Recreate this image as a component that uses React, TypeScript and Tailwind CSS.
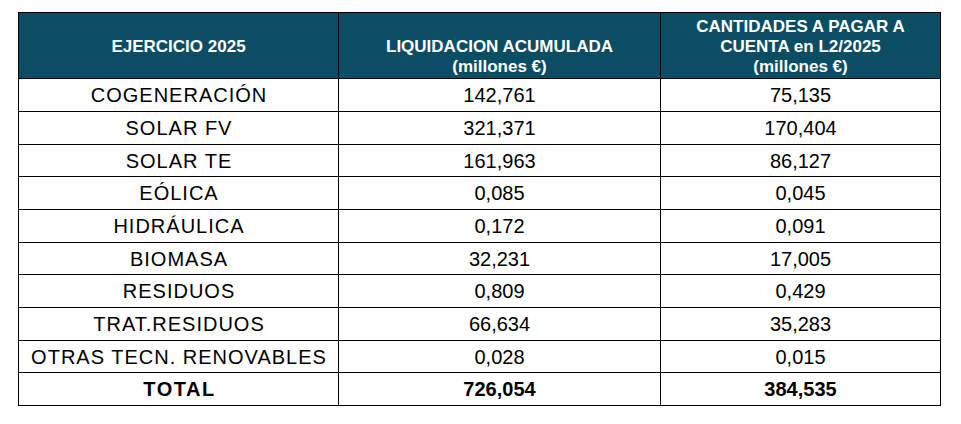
import React from "react";

const rows: [string, string, string, number][] = [
  ["COGENERACIÓN", "142,761", "75,135", 32],
  ["SOLAR FV", "321,371", "170,404", 32],
  ["SOLAR TE", "161,963", "86,127", 31],
  ["EÓLICA", "0,085", "0,045", 32],
  ["HIDRÁULICA", "0,172", "0,091", 32],
  ["BIOMASA", "32,231", "17,005", 31],
  ["RESIDUOS", "0,809", "0,429", 32],
  ["TRAT.RESIDUOS", "66,634", "35,283", 32],
  ["OTRAS TECN. RENOVABLES", "0,028", "0,015", 31],
];

const hClass: Record<number, string> = {
  31: "h-[31px]",
  32: "h-[32px]",
};

export default function App() {
  return (
    <div className="w-[961px] h-[424px] bg-white pt-[12px] pl-[18px]" style={{ fontFamily: '"Liberation Sans", Arial, sans-serif' }}>
      <div className="grid grid-cols-[319px_321px_279px] gap-px bg-black p-px w-[923px] text-black">
        <div className="h-[65px] bg-[#0b4d62] text-white font-bold text-[17px] leading-[20px] flex items-center justify-center text-center pt-[3px]">
          EJERCICIO 2025
        </div>
        <div className="h-[65px] bg-[#0b4d62] text-white font-bold text-[17px] leading-[20px] flex flex-col justify-end items-center text-center pb-[1px]">
          <div>LIQUIDACION ACUMULADA</div>
          <div>(millones €)</div>
        </div>
        <div className="h-[65px] bg-[#0b4d62] text-white font-bold text-[17px] leading-[20px] flex flex-col justify-end items-center text-center pb-[1px]">
          <div>CANTIDADES A PAGAR A</div>
          <div>CUENTA en L2/2025</div>
          <div>(millones €)</div>
        </div>
        {rows.map(([a, b, c, h]) => (
          <React.Fragment key={a}>
            <div className={`${hClass[h]} bg-white flex items-center justify-center text-[20px] tracking-[1px] pl-[1px]`}>{a}</div>
            <div className={`${hClass[h]} bg-white flex items-center justify-center text-[20px]`}>{b}</div>
            <div className={`${hClass[h]} bg-white flex items-center justify-center text-[20px]`}>{c}</div>
          </React.Fragment>
        ))}
        <div className="h-[32px] bg-white flex items-center justify-center text-[20px] font-bold tracking-[1.5px] pl-[2px]">TOTAL</div>
        <div className="h-[32px] bg-white flex items-center justify-center text-[20px] font-bold">726,054</div>
        <div className="h-[32px] bg-white flex items-center justify-center text-[20px] font-bold">384,535</div>
      </div>
    </div>
  );
}
